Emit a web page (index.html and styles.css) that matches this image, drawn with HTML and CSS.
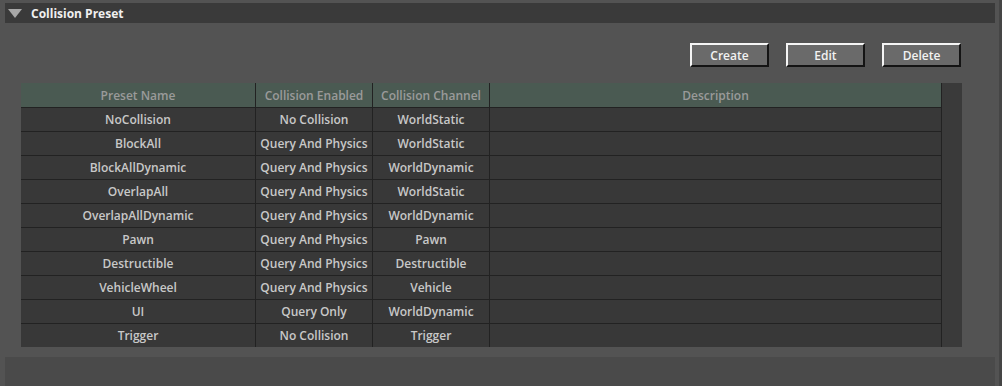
FILE: index.html
```html
<!DOCTYPE html>
<html>
  <head>
    <title>Collision Preset</title>
    <link rel="stylesheet" href="styles.css">
  </head>
  <body>
    <div class="panel">
      <div class="panelHeader">
        <span class="arrow"></span>
        <span class="panelTitle">Collision Preset</span>
      </div>
      <div class="toolbar">
        <button class="btn">Create</button>
        <button class="btn">Edit</button>
        <button class="btn">Delete</button>
      </div>
      <div class="tableWrap">
        <table class="presets">
          <thead>
            <tr>
              <th class="colName">Preset Name</th>
              <th class="colEnabled">Collision Enabled</th>
              <th class="colChannel">Collision Channel</th>
              <th class="colDesc">Description</th>
            </tr>
          </thead>
          <tbody>
            <tr><td>NoCollision</td><td>No Collision</td><td>WorldStatic</td><td></td></tr>
            <tr><td>BlockAll</td><td>Query And Physics</td><td>WorldStatic</td><td></td></tr>
            <tr><td>BlockAllDynamic</td><td>Query And Physics</td><td>WorldDynamic</td><td></td></tr>
            <tr><td>OverlapAll</td><td>Query And Physics</td><td>WorldStatic</td><td></td></tr>
            <tr><td>OverlapAllDynamic</td><td>Query And Physics</td><td>WorldDynamic</td><td></td></tr>
            <tr><td>Pawn</td><td>Query And Physics</td><td>Pawn</td><td></td></tr>
            <tr><td>Destructible</td><td>Query And Physics</td><td>Destructible</td><td></td></tr>
            <tr><td>VehicleWheel</td><td>Query And Physics</td><td>Vehicle</td><td></td></tr>
            <tr><td>UI</td><td>Query Only</td><td>WorldDynamic</td><td></td></tr>
            <tr><td>Trigger</td><td>No Collision</td><td>Trigger</td><td></td></tr>
          </tbody>
        </table>
        <div class="scrollCol"></div>
      </div>
      <div class="footer"></div>
    </div>
  </body>
</html>
```

FILE: styles.css
```css
html, body {
  margin: 0;
  height: 100%;
}
body {
  background-color: #535353;
  font-family: "Open Sans", "Noto Sans", sans-serif;
  font-weight: 600;
  overflow: hidden;
  border-right: 3px solid #454545;
  box-sizing: border-box;
}
.panel {
  padding: 3px 4px 0 5px;
}
.panelHeader {
  height: 20px;
  background-color: #3a3a3a;
  display: flex;
  align-items: center;
  gap: 9px;
  padding-left: 3px;
}
.arrow {
  width: 0;
  height: 0;
  border-left: 7px solid transparent;
  border-right: 7px solid transparent;
  border-top: 9px solid #a8a8a8;
}
.panelTitle {
  color: #f0f0f0;
  font-size: 12px;
  font-weight: 700;
}
.toolbar {
  display: flex;
  justify-content: flex-end;
  gap: 17px;
  padding: 20px 34px 0 0;
  height: 24px;
}
.btn {
  width: 79px;
  height: 24px;
  background-color: #6a6a6a;
  color: #f2f2f2;
  font-family: "Open Sans", "Noto Sans", sans-serif;
  font-weight: 600;
  font-size: 12px;
  border-top: 2px solid #f5f5f5;
  border-left: 2px solid #f5f5f5;
  border-bottom: 2px solid #141414;
  border-right: 2px solid #141414;
  padding: 0;
}
.tableWrap {
  display: flex;
  margin: 16px 30px 0 16px;
}
.presets {
  border-collapse: collapse;
  width: 921px;
  background-color: #383838;
  table-layout: fixed;
}
.presets th {
  background-color: #4a5a52;
  color: #9a9a9a;
  font-size: 12px;
  font-weight: 600;
  height: 24px;
  padding: 0;
  border-left: 1px solid #222;
  border-bottom: 1px solid #222;
}
.presets td {
  color: #c8c8c8;
  font-size: 12px;
  font-weight: 600;
  text-align: center;
  height: 23px;
  padding: 0;
  border-left: 1px solid #222;
  border-top: 1px solid #222;
}
.presets tr > :first-child {
  border-left: none;
}
.presets tbody tr:first-child td {
  border-top: none;
}
.presets tr > :last-child {
  border-right: 1px solid #222;
}
.colName { width: 234px; }
.colEnabled { width: 116px; }
.colChannel { width: 116px; }
.scrollCol {
  width: 20px;
  background-color: #3a3a3a;
}
.footer {
  margin-top: 10px;
  height: 40px;
  background-color: #4a4a4a;
}
```
